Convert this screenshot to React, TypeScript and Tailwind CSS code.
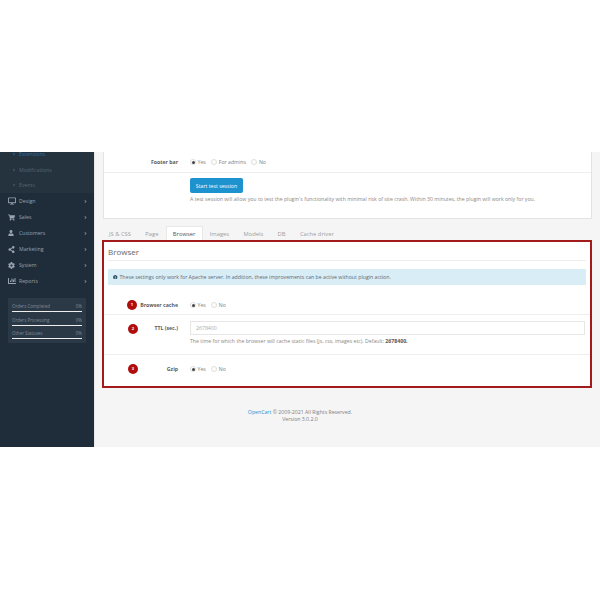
import { FaAngleRight, FaChartBar, FaCog, FaDesktop, FaInfoCircle, FaShareAlt, FaShoppingCart, FaUser } from 'react-icons/fa';
import type { ReactNode } from 'react';

const subItems = [
  { label: 'Extensions', active: true },
  { label: 'Modifications', active: false },
  { label: 'Events', active: false },
];

const menuItems = [
  { label: 'Design', icon: <FaDesktop className="w-[8px] h-[8px]" /> },
  { label: 'Sales', icon: <FaShoppingCart className="w-[7px] h-[7px]" /> },
  { label: 'Customers', icon: <FaUser className="w-[6px] h-[6px]" /> },
  { label: 'Marketing', icon: <FaShareAlt className="w-[7px] h-[7px]" /> },
  { label: 'System', icon: <FaCog className="w-[7px] h-[7px]" /> },
  { label: 'Reports', icon: <FaChartBar className="w-[8px] h-[8px]" /> },
];

const stats = ['Orders Completed', 'Orders Processing', 'Other Statuses'];

const tabs = ['JS & CSS', 'Page', 'Browser', 'Images', 'Models', 'DB', 'Cache driver'];

function Radio({ label, checked = false }: { label: string; checked?: boolean }) {
  return (
    <span className="flex items-center gap-[1.5px]">
      <span className="flex items-center justify-center w-[6px] h-[6px] rounded-full border-[0.5px] border-[#dedede] bg-white">
        {checked && <span className="w-[3px] h-[3px] rounded-full bg-[#444]" />}
      </span>
      <span className="text-[#808080]">{label}</span>
    </span>
  );
}

function Row({ label, n, badgeClass, labelClass, children, className }: {
  label: string;
  n: number;
  badgeClass: string;
  labelClass?: string;
  children: ReactNode;
  className: string;
}) {
  return (
    <div className={`relative flex ${className}`}>
      {/* Numbered callout sitting over the row */}
      <span className={`absolute flex items-center justify-center w-[10px] h-[10px] rounded-full bg-[#b00d0d] text-[4px] font-bold text-white ${badgeClass}`}>
        {n}
      </span>
      <div className={`w-[74px] shrink-0 text-right font-bold text-[#5c5c5c] ${labelClass ?? ''}`}>{label}</div>
      <div className="ml-[12px] flex-1 min-w-0">{children}</div>
    </div>
  );
}

export default function App() {
  return (
    <div className="w-[600px] h-[600px] bg-white pt-[152px] overflow-hidden font-['Open_Sans',sans-serif] text-[5.2px] leading-[8px]">
      <div className="flex h-[295px] bg-[#f5f5f5]">
        {/* Sidebar */}
        <aside className="w-[94px] shrink-0 bg-[#1f2c39] overflow-hidden">
          <div className="bg-[#25333f]">
            {subItems.map((item) => (
              <div key={item.label} className={`flex items-center h-[15.7px] pl-[12px] gap-[3px] first:-mt-[6px] ${item.active ? 'text-[#2b6ea6]' : 'text-[#56656f]'}`}>
                <FaAngleRight className="w-[4px] h-[4px]" />
                {item.label}
              </div>
            ))}
          </div>
          {menuItems.map((item) => (
            <div key={item.label} className="flex items-center h-[16px] pl-[8px] pr-[6px] text-[#98a3ae]">
              <span className="w-[11px] flex justify-start">{item.icon}</span>
              <span>{item.label}</span>
              <FaAngleRight className="ml-auto w-[5px] h-[5px] text-[#7d8995]" />
            </div>
          ))}
          <div className="mt-[9px] mx-[8px] bg-[#2b3947] px-[4px] pt-[4px] pb-[4px] text-[4.4px] text-[#7f8b97]">
            {stats.map((s) => (
              <div key={s} className="mb-[3.5px] last:mb-0">
                <div className="flex justify-between leading-[9px]">
                  <span>{s}</span>
                  <span>0%</span>
                </div>
                <div className="h-[1px] bg-[#eeeeee]" />
              </div>
            ))}
          </div>
        </aside>

        {/* Content */}
        <main className="flex-1 min-w-0 pl-[8px] pr-[8px] border-l border-[#e8e8e8]">
          <section className="h-[67px] bg-white border border-t-0 border-[#e3e3e3] rounded-b-[1px]">
            <div className="flex items-center h-[21px] border-b border-[#eeeeee]">
              <div className="w-[74px] text-right font-bold text-[#5c5c5c]">Footer bar</div>
              <div className="ml-[12px] flex gap-[5.5px]">
                <Radio label="Yes" checked />
                <Radio label="For admins" />
                <Radio label="No" />
              </div>
            </div>
            <div className="pl-[86px] pt-[5px]">
              <button className="block w-[53px] h-[15px] bg-[#1e91cf] rounded-[2px] text-white text-[5.2px]">
                Start test session
              </button>
              <p className="mt-[2px] text-[#888] whitespace-nowrap">
                A test session will allow you to test the plugin`s functionality with minimal risk of site crash. Within 30 minutes, the plugin will work only for you.
              </p>
            </div>
          </section>

          <nav className="flex h-[14px] mt-[7px] pl-[6px] items-center text-[#a0a0a0] text-[5.8px]">
            {tabs.map((tab) => (
              <div
                key={tab}
                className={`h-full flex items-center px-[6.2px] border border-b-0 first:pl-0 first:border-l-0 ${tab === 'Browser' ? 'bg-white text-[#555] border-[#e8e8e8] rounded-t-[1px]' : 'border-transparent'}`}
              >
                {tab}
              </div>
            ))}
          </nav>

          <section className="-ml-[1px] h-[148px] bg-white border-2 border-[#a31a1a] px-[4px]">
            <h2 className="h-[19px] border-b border-[#eeeeee] pt-[4px] text-[8px] leading-[11px] font-normal text-[#666]">Browser</h2>
            <div className="flex items-center gap-[2px] mt-[8px] h-[16px] pl-[5px] bg-[#d9edf7] rounded-[1px] text-[#5a6a73]">
              <FaInfoCircle className="w-[4.5px] h-[4.5px] text-[#31566b]" />
              <span>These settings only work for Apache server. In addition, these improvements can be active without plugin action.</span>
            </div>
            <div className="-mx-[4px]">
              <Row n={1} label="Browser cache" badgeClass="left-[23px] top-[15px]" className="h-[30px] items-end pb-[5px] border-b border-[#eeeeee]">
                <div className="flex gap-[5.5px]">
                  <Radio label="Yes" checked />
                  <Radio label="No" />
                </div>
              </Row>
              <Row n={2} label="TTL (sec.)" badgeClass="left-[24px] top-[9px]" labelClass="pt-[3px]" className="h-[40px] pt-[6px] border-b border-[#eeeeee]">
                <div className="flex items-center h-[14px] mr-[5px] pl-[5px] border border-[#e6e6e6] text-[#aaa]">2678400</div>
                <p className="mt-[2px] text-[#888] whitespace-nowrap">
                  The time for which the browser will cache static files (js, css, images etc). Default: <b className="text-[#555]">2678400.</b>
                </p>
              </Row>
              <Row n={3} label="Gzip" badgeClass="left-[24px] top-[9px]" className="h-[30px] pt-[10px]">
                <div className="flex gap-[5.5px]">
                  <Radio label="Yes" checked />
                  <Radio label="No" />
                </div>
              </Row>
            </div>
          </section>

          <footer className="w-[394px] mt-[21px] text-center text-[#808080] leading-[7px]">
            <div>
              <span className="text-[#1e91cf]">OpenCart</span> © 2009-2021 All Rights Reserved.
            </div>
            <div>Version 3.0.2.0</div>
          </footer>
        </main>
      </div>
    </div>
  );
}
